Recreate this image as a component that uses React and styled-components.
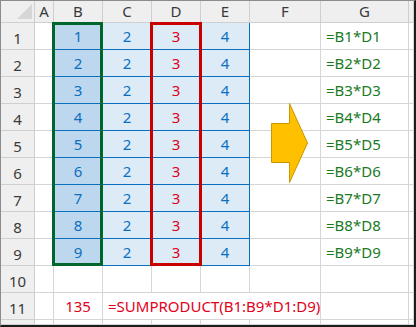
import styled, { createGlobalStyle } from "styled-components";

const GlobalStyle = createGlobalStyle`
  html, body {
    margin: 0;
    padding: 0;
    background: #fff;
  }
  body {
    font-family: "Noto Sans", "Liberation Sans", sans-serif;
  }
`;

const COLS = ["A", "B", "C", "D", "E", "F", "G", ""];
const ROWS = [1, 2, 3, 4, 5, 6, 7, 8, 9];

const BLUE = "#0b6fc0";
const RED = "#e2001a";
const GREEN = "#197a1f";
const LINE = "#d6d6d6";

export default function App() {
  return (
    <>
      <GlobalStyle />
      <Frame>
        <Sheet>
          <Corner $r={1} $c={1}>
            <CornerTriangle />
          </Corner>
          {COLS.map((c, i) => (
            <Head key={"h" + i} $r={1} $c={i + 2}>
              {c}
            </Head>
          ))}

          {ROWS.map((r) => (
            <Row key={r} r={r} />
          ))}

          <RowHead $r={11} $c={1}>10</RowHead>
          {COLS.map((c, i) => (
            <Cell key={"r10" + i} $r={11} $c={i + 2} />
          ))}

          <RowHead $r={12} $c={1}>11</RowHead>
          <Cell $r={12} $c={2} />
          <Cell $r={12} $c={3} $align="center" $color={RED}>
            135
          </Cell>
          <Cell $r={12} $c={4} $span={4} $color={RED} $align="flex-start">
            =SUMPRODUCT(B1:B9*D1:D9)
          </Cell>
          <Cell $r={12} $c={8} />
          <Cell $r={12} $c={9} />

          <RowHead $r={13} $c={1} $stub />
          {COLS.map((c, i) => (
            <Cell key={"r12" + i} $r={13} $c={i + 2} />
          ))}

          <RangeBox $col={3} $color="#00662b" $right={0} />
          <RangeBox $col={5} $color="#c80000" $right={-1} />

          <ArrowSlot>
            <svg width="39" height="82" viewBox="0 0 39 82">
              <polygon
                points="1.5,21.5 19.5,21.5 19.5,1.5 37.5,41 19.5,80.5 19.5,60.5 1.5,60.5"
                fill="#ffc000"
                stroke="#c99700"
                strokeWidth="1"
              />
            </svg>
          </ArrowSlot>
        </Sheet>
      </Frame>
    </>
  );
}

function Row({ r }) {
  const row = r + 1;
  return (
    <>
      <RowHead $r={row} $c={1}>{r}</RowHead>
      <Cell $r={row} $c={2} />
      <Cell $r={row} $c={3} $fill="#bdd7ee" $line={BLUE} $color={BLUE} $align="center">
        {r}
      </Cell>
      <Cell $r={row} $c={4} $fill="#ddebf7" $line={BLUE} $color={BLUE} $align="center">
        2
      </Cell>
      <Cell $r={row} $c={5} $fill="#ddebf7" $line={BLUE} $color={RED} $align="center">
        3
      </Cell>
      <Cell
        $r={row}
        $c={6}
        $fill="#ddebf7"
        $line={BLUE}
        $edge={BLUE}
        $color={BLUE}
        $align="center"
      >
        4
      </Cell>
      <Cell $r={row} $c={7} />
      <Cell $r={row} $c={8} $color={GREEN} $align="flex-start">
        =B{r}*D{r}
      </Cell>
      <Cell $r={row} $c={9} />
    </>
  );
}

const Frame = styled.div`
  box-sizing: border-box;
  width: 416px;
  height: 327px;
  border-top: 1px solid #8c8c8c;
  border-left: 1px solid #8c8c8c;
  border-right: 2px solid #1c1c1c;
  border-bottom: 2px solid #1c1c1c;
  overflow: hidden;
`;

const Sheet = styled.div`
  display: grid;
  grid-template-columns: 34px 19px 49px 49px 49px 49px 71px 88px 5px;
  grid-template-rows: 22px repeat(11, 27px) 5px;
`;

const Head = styled.div`
  box-sizing: border-box;
  grid-row: ${(p) => p.$r};
  grid-column: ${(p) => p.$c};
  background: #efefef;
  border-right: 1px solid #cfcfcf;
  border-bottom: 1px solid #cfcfcf;
  color: #3a3a3a;
  font-size: 15px;
  line-height: 1;
  display: flex;
  justify-content: center;
  align-items: center;
`;

const Corner = styled(Head)`
  position: relative;
`;

const CornerTriangle = styled.div`
  position: absolute;
  right: 2px;
  bottom: 3px;
  width: 0;
  height: 0;
  border-left: 15px solid transparent;
  border-bottom: 15px solid #d6d6d6;
`;

const RowHead = styled(Head)`
  padding-top: ${(p) => (p.$stub ? "0" : "5px")};
`;

const Cell = styled.div`
  box-sizing: border-box;
  grid-row: ${(p) => p.$r};
  grid-column: ${(p) => (p.$span ? `${p.$c} / span ${p.$span}` : p.$c)};
  background: ${(p) => p.$fill || "#fff"};
  border-right: 1px solid ${(p) => p.$edge || LINE};
  border-bottom: 1px solid ${(p) => p.$line || LINE};
  color: ${(p) => p.$color || "#000"};
  font-size: 15px;
  line-height: 1;
  white-space: nowrap;
  display: flex;
  align-items: center;
  justify-content: ${(p) => p.$align || "flex-start"};
  padding: ${(p) => (p.$align === "flex-start" ? "1px 0 0 5px" : "1px 0 0 0")};
`;

const RangeBox = styled.div`
  grid-column: ${(p) => p.$col};
  grid-row: 2 / 11;
  margin: -1px ${(p) => p.$right}px 0 -2px;
  border: 3px solid ${(p) => p.$color};
  pointer-events: none;
  z-index: 1;
`;

const ArrowSlot = styled.div`
  grid-column: 7;
  grid-row: 5 / 8;
  align-self: start;
  justify-self: start;
  margin: -2px 0 0 20px;
  display: flex;
  z-index: 2;
`;
